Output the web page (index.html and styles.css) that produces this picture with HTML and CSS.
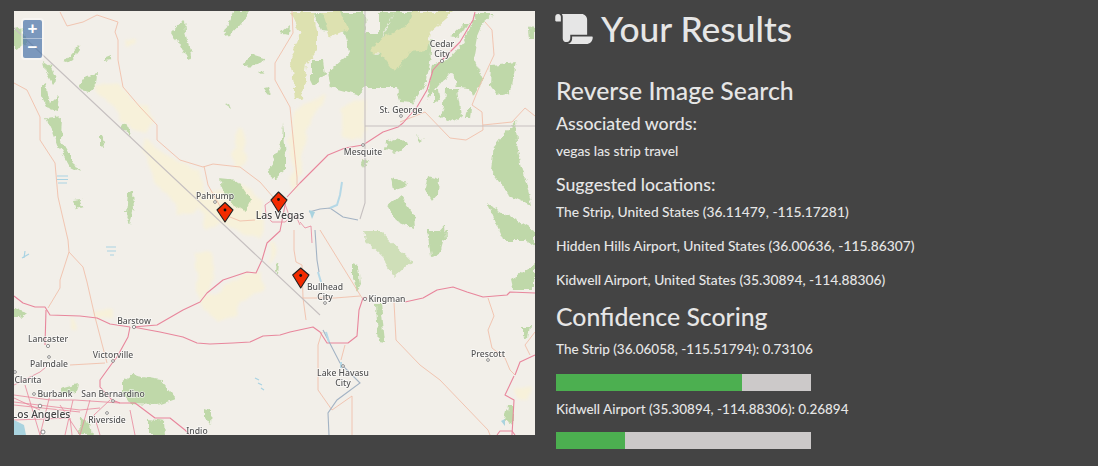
FILE: index.html
```html
<!DOCTYPE html>
<html lang="en">
<head>
<meta charset="utf-8">
<title>Your Results</title>
<link rel="stylesheet" href="styles.css">
</head>
<body>
<main class="page">
  <section class="map">
    <svg class="map-art" viewBox="14 11 521 424" xmlns="http://www.w3.org/2000/svg">
      <defs>
        <filter id="rough" x="-5%" y="-5%" width="110%" height="110%">
          <feTurbulence type="fractalNoise" baseFrequency="0.13" numOctaves="3" seed="4" result="n"/>
          <feDisplacementMap in="SourceGraphic" in2="n" scale="7" xChannelSelector="R" yChannelSelector="G"/>
          <feGaussianBlur stdDeviation="0.55"/>
        </filter>
        <filter id="haze" x="-5%" y="-5%" width="110%" height="110%">
          <feTurbulence type="fractalNoise" baseFrequency="0.06" numOctaves="2" seed="9" result="n"/>
          <feDisplacementMap in="SourceGraphic" in2="n" scale="12" xChannelSelector="R" yChannelSelector="G"/>
          <feGaussianBlur stdDeviation="1.6"/>
        </filter>
      </defs>
      <g class="desert">
        <path d="M95 85 120 83 132 100 150 105 152 122 145 132 122 122 116 108 100 95Z"/>
        <path d="M143 140 165 152 200 172 205 200 196 212 178 214 165 192 150 170Z"/>
        <path d="M240 125 245 128 246 160 236 168 234 150Z"/>
        <path d="M125 38 135 38 134 45 126 45Z"/>
        <path d="M195 252 212 255 214 285 205 298 232 282 262 272 262 290 240 300 232 320 218 325 205 312 195 285Z"/>
        <path d="M295 110 325 95 306 130 302 175 292 190 290 140Z"/>
        <path d="M342 105 365 100 365 140 345 137 342 125Z"/>
        <path d="M195 195 240 185 262 200 262 240 238 232 222 222 208 228Z"/>
        <path d="M94 310 112 308 112 318 96 320Z"/>
        <path d="M70 320 76 320 76 328 70 328Z"/>
        <path d="M270 240 276 240 274 262 270 262Z"/>
        <path d="M515 388 530 385 530 400 518 398Z"/>
      </g>
      <g class="forest">
        <path d="M14 30 22 28 28 42 18 48 14 50Z"/>
        <path d="M184 20 185 32 192 58 187 59 180 46 172 33Z"/>
        <path d="M234 12 251 12 240 24 230 35 222 36Z"/>
        <path d="M64 62 78 46 79 50 72 60 67 63Z"/>
        <path d="M105 58 110 56 110 60 105 61Z"/>
        <path d="M78 87 84 78 98 74 97 83 89 92 81 90Z"/>
        <path d="M44 62 50 66 57 80 53 85 46 72Z"/>
        <path d="M41 86 46 83 50 104 59 95 57 111 47 108 41 96Z"/>
        <path d="M46 118 62 116 61 140 70 155 80 172 70 167 58 146 53 132Z"/>
        <path d="M121 126 127 124 132 136 123 131Z"/>
        <path d="M100 136 102 136 105 146 100 145Z"/>
        <path d="M128 192 133 191 134 210 130 224 126 214Z"/>
        <path d="M73 200 81 199 83 207 76 209Z"/>
        <path d="M218 179 238 181 251 200 245 212 232 204Z"/>
        <path d="M225 105 229 104 231 109Z"/>
        <path d="M243 64 253 54 266 58 258 65 243 66Z"/>
        <path d="M259 72 263 70 262 74Z"/>
        <path d="M263 88 268 87 271 95 265 94Z"/>
        <path d="M269 166 280 152 280 172 271 179Z"/>
        <path d="M280 33 290 24 289 35Z"/>
        <path d="M283 122 286 157 286 170 275 180 270 167 282 140Z"/>
        <path d="M313 12 322 30 345 33 350 53 327 73 330 87 360 95 365 88 397 88 400 102 413 103 427 80 430 63 432 40 400 50 375 55 385 30 395 12 380 12 380 33 366 33 365 12Z"/>
        <path d="M395 12 420 12 412 30 390 45 375 52Z"/>
        <path d="M311 60 323 60 325 74 314 86 311 80Z"/>
        <path d="M451 36 465 23 469 23 458 38Z"/>
        <path d="M476 13 494 13 483 23 477 37 473 60 483 80 473 97 470 88 457 87 453 73 443 80 427 100 433 65 450 58 465 40Z"/>
        <path d="M433 90 438 90 440 100 433 103Z"/>
        <path d="M445 89 458 89 462 116 450 123 439 115 444 105Z"/>
        <path d="M467 109 471 109 470 119 465 119Z"/>
        <path d="M491 65 516 62 510 92 497 95 490 85Z"/>
        <path d="M529 29 534 26 534 39 530 39Z"/>
        <path d="M416 136 423 140 420 142Z"/>
        <path d="M386 142 396 138 408 142 404 148 394 153 385 150Z"/>
        <path d="M363 158 369 160 364 169 361 163Z"/>
        <path d="M391 178 408 183 404 187 393 189Z"/>
        <path d="M428 176 439 179 438 194 432 201 425 190Z"/>
        <path d="M388 206 400 196 414 215 415 229 396 221Z"/>
        <path d="M515 121 518 150 532 206 510 196 491 170 494 147Z"/>
        <path d="M488 204 533 230 534 240 504 240Z"/>
        <path d="M429 242 445 224 446 240 430 240Z"/>
        <path d="M427 231 446 231 440 254 431 257Z"/>
        <path d="M511 231 534 231 534 246Z"/>
        <path d="M511 280 534 264 534 289 513 289Z"/>
        <path d="M352 263 359 265 361 284 357 291 352 275Z"/>
        <path d="M376 304 381 304 385 342 379 341 377 322Z"/>
        <path d="M277 262 279 263 278 274 276 271Z"/>
        <path d="M523 326 530 326 528 338 523 336Z"/>
        <path d="M14 308 27 312 20 318 14 318Z"/>
        <path d="M122 382 132 375 160 380 175 398 158 404 130 403 122 392Z"/>
        <path d="M60 388 78 383 76 392 61 394Z"/>
        <path d="M205 408 211 410 210 424 205 418Z"/>
        <path d="M148 420 165 422 166 435 148 435Z"/>
        <path d="M80 418 90 424 92 435 79 435Z"/>
        <path d="M508 406 513 406 513 424 505 420Z"/>
      </g>
      <g class="forest light">
        <path d="M364 231 380 231 412 262 395 277 383 257 366 241Z"/>
      </g>
      <g class="khaki">
        <path d="M370 50 383 37 410 23 413 12 453 12 430 32 427 50 410 52 395 73 383 57Z"/>
        <path d="M290 12 313 12 317 30 317 50 307 63 303 97 295 100 293 77 290 63 300 33Z"/>
        <path d="M322 12 340 12 348 30 330 38Z"/>
      </g>
      <g class="lines">
        <g class="thin">
          <path d="M60 12 67 26 83 22 97 15 118 22 115 32 118 40 118 60 123 87 140 107 157 125 157 140 180 160 203 167 213 164 240 167 260 182 273 197"/>
          <path d="M14 83 27 90 40 117 40 140 55 163 58 197 68 240 69 252 60 280 60 288 48 308"/>
          <path d="M69 252 83 267 87 282 95 317 107 363"/>
          <path d="M292 11 293 33 275 63 275 80 290 107 297 177 297 185"/>
          <path d="M204 166 208 185 225 215 240 221 255 220"/>
          <path d="M485 22 492 30 494 55 480 85 472 105 482 112 483 130 466 140 450 138 425 112 400 122"/>
          <path d="M483 125 512 122 525 108 535 116"/>
          <path d="M70 365 105 363"/>
          <path d="M294 230 294 250 296 262 302 265 303 298 306 320"/>
          <path d="M320 230 362 298"/>
          <path d="M322 332 318 345 318 390 332 410 352 396 352 412 352 435"/>
          <path d="M345 345 341 360"/>
          <path d="M394 302 396 340 420 365 440 380 488 430 490 435"/>
          <path d="M488 298 494 316 488 330 492 348 505 358 510 370 515 375"/>
          <path d="M302 298 320 298 335 298 360 296"/>
          <path d="M535 332 525 345 530 355"/>
        </g>
        <g class="road">
          <path d="M475 12 473 20 460 42 442 60 433 70 427 90 417 107 403 123 398 127 383 132 363 145 345 148 328 155 313 170 300 183 287 197"/>
          <path d="M286 200 280 231 267 243 262 260 256 273 247 272 223 280 207 293 200 302 183 310 157 325 133 327"/>
          <path d="M133 327 160 332 183 337 197 343 210 344 233 343 250 342 263 336 280 335 290 332 313 327 320 332 327 343 348 343 357 336 359 310 363 298 367 298"/>
          <path d="M405 302 423 298 437 290 453 287 467 292 483 297 507 295 510 292 535 293"/>
          <path d="M130 327 128 337 117 357 113 362 100 380 100 387 112 400 120 403 135 403 155 418 170 418 185 430 190 435"/>
          <path d="M130 327 110 324 97 318 80 316 50 315 45 307 35 307 23 303 14 296"/>
          <path d="M46 310 45 345"/>
          <path d="M514 376 505 395 514 400 512 435"/>
          <path d="M535 355 520 362 515 375"/>
          <path d="M497 435 500 431 512 431 515 435"/>
          <path class="fine" d="M14 385 40 372 46 367M14 395 50 400 75 400 120 403M14 402 80 410 100 408M25 385 40 435M50 395 40 435M90 400 80 435M73 400 65 435M14 405 80 412M14 420 70 418 72 435M110 400 94 415 100 435M130 410 135 435M60 405 80 435M14 398 40 410"/>
          <path class="fine" d="M265 205 275 198 285 204 290 218 285 222 272 222 266 215Z"/>
          <path class="fine" d="M300 222 305 228 311 226 312 243M296 216 300 225"/>
        </g>
        <g class="border">
          <path d="M14 28 240 240 320 315"/>
          <path d="M365 11 365 203 360 219"/>
          <path d="M365 126 535 126"/>
        </g>
        <g class="river">
          <path d="M309 212 320 209 330 208 343 217 358 220"/>
          <path d="M315 230 317 260 319 272M323 330 340 363 360 383 337 400 328 413 329 435"/>
        </g>
        <g class="lake">
          <path d="M342 182 340 195 337 205 330 208"/>
          <path d="M318 272 321 282M326 332 329 342M341 362 341 368"/>
        </g>
        <g class="stripes">
          <path d="M57 176 68 176M57 179.5 68 179.5M58 183 67 183"/>
          <path d="M106 247 116 247M107 251 116 251M110 255 114 255"/>
          <path d="M255 378 259 380M258 383 262 385M261 388 264 390"/>
          <path d="M22 258 29 254M25 251 24 258"/>
        </g>
        <g class="water">
          <path d="M14 420 24 425 26 435 14 435Z"/>
          <path d="M501 421 505 419 505 426Z"/>
          <path d="M309 210 315 212 312 219Z"/>
        </g>
      </g>
      <g class="towns">
        <circle cx="442" cy="61" r="1.6"/><circle cx="401" cy="116" r="1.4"/><circle cx="363" cy="145" r="1.4"/><circle cx="215" cy="202" r="1.4"/>
        <circle cx="325" cy="303" r="1.4"/><circle cx="365" cy="299" r="1.6"/><circle cx="488" cy="360" r="1.4"/><circle cx="343" cy="366" r="1.4"/>
        <circle cx="134" cy="327" r="1.6"/><circle cx="48" cy="346" r="1.6"/><circle cx="49" cy="357" r="1.4"/><circle cx="113" cy="361" r="1.4"/>
        <circle cx="15" cy="372" r="1.4"/><circle cx="34" cy="394" r="1.4"/><circle cx="40" cy="406" r="1.8"/><circle cx="113" cy="401" r="1.4"/><circle cx="107" cy="413" r="1.4"/><circle cx="43" cy="432" r="2"/>
      </g>
      <g class="labels">
        <text x="442" y="47">Cedar</text><text x="442" y="57">City</text>
        <text x="401" y="113">St. George</text>
        <text x="363" y="155">Mesquite</text>
        <text x="215" y="199">Pahrump</text>
        <text x="325" y="290">Bullhead</text><text x="325" y="300">City</text>
        <text x="387" y="302">Kingman</text>
        <text x="488" y="357">Prescott</text>
        <text x="343" y="376">Lake Havasu</text><text x="343" y="386">City</text>
        <text x="134" y="324">Barstow</text>
        <text x="48" y="342">Lancaster</text>
        <text x="113" y="358">Victorville</text>
        <text x="49" y="367">Palmdale</text>
        <text x="28" y="383">Clarita</text>
        <text x="55" y="397">Burbank</text>
        <text x="113" y="397">San Bernardino</text>
        <text x="107" y="423">Riverside</text>
        <text x="197" y="433.5">Indio</text>
        <text class="big" x="280" y="219">Las Vegas</text>
        <text class="big" x="41" y="418">Los Angeles</text>
      </g>
      <g class="pins">
        <path d="M225 202.5 233 210 225 222 217 210Z"/><circle cx="225" cy="210" r="1.4"/>
        <path d="M278.5 192 287 200 278.5 212 271 200Z"/><circle cx="278.5" cy="199.5" r="1.4"/>
        <path d="M300.7 268 309 275 300.7 288 292.7 275Z"/><circle cx="300.7" cy="275.5" r="1.4"/>
      </g>
    </svg>
    <div class="zoom">
      <button class="zoom-btn" type="button">+</button>
      <button class="zoom-btn" type="button">−</button>
    </div>
  </section>
  <section class="results">
    <h1 class="title">
      <svg class="scroll" viewBox="0 0 640 512" xmlns="http://www.w3.org/2000/svg"><path d="M48 0C21.53 0 0 21.53 0 48v64c0 8.84 7.16 16 16 16h80V48C96 21.53 74.47 0 48 0zm208 412.57V352h288V96c0-52.94-43.06-96-96-96H111.59C121.74 13.41 128 29.92 128 48v368c0 38.87 34.65 69.65 74.77 63.12C234.27 474 256 444.46 256 412.57zM288 384v32c0 52.94-43.06 96-96 96h336c61.86 0 112-50.14 112-112 0-8.84-7.16-16-16-16H288z"/></svg>
      Your Results
    </h1>
    <h2 class="heading h-rev">Reverse Image Search</h2>
    <h3 class="sub">Associated words:</h3>
    <p class="line words">vegas las strip travel</p>
    <h3 class="sub">Suggested locations:</h3>
    <p class="line">The Strip, United States (36.11479, -115.17281)</p>
    <p class="line">Hidden Hills Airport, United States (36.00636, -115.86307)</p>
    <p class="line">Kidwell Airport, United States (35.30894, -114.88306)</p>
    <h2 class="heading h-conf">Confidence Scoring</h2>
    <p class="score">The Strip (36.06058, -115.51794): 0.73106</p>
    <div class="bar"><div class="fill" style="width:73.106%"></div></div>
    <p class="score score-next">Kidwell Airport (35.30894, -114.88306): 0.26894</p>
    <div class="bar"><div class="fill" style="width:26.894%"></div></div>
  </section>
</main>
</body>
</html>
```
FILE: styles.css
```css
* { box-sizing: border-box; }
html, body { margin: 0; height: 100%; }
body {
  background: #444444;
  color: #e6e6e6;
  font-family: Lato, "Open Sans", sans-serif;
  font-weight: 500;
  overflow: hidden;
}
.page {
  display: flex;
  align-items: flex-start;
  gap: 21px;
  padding: 11px 0 0 14px;
}
.map {
  position: relative;
  flex: none;
  width: 521px;
  height: 424px;
  background: #f2efe9;
  overflow: hidden;
}
.map-art { display: block; width: 100%; height: 100%; }
.desert { filter: url(#haze); }
.desert path { fill: #f7f1da; }
.khaki { filter: url(#rough); }
.khaki path { fill: #dde1b0; }
.forest { filter: url(#rough); }
.forest path { fill: #bfd8a9; }
.forest.light path { fill: #cfdfb8; }
.lines { filter: blur(0.35px); }
.thin path { fill: none; stroke: #f0c0aa; stroke-width: 0.9; }
.road path { fill: none; stroke: #e8869c; stroke-width: 1.1; stroke-linejoin: round; }
.road .fine { stroke-width: 0.8; }
.border path { fill: none; stroke: #c6c0c0; stroke-width: 1.1; }
.river path { fill: none; stroke: #a3b3c4; stroke-width: 1.1; }
.lake path { fill: none; stroke: #b5d8e6; stroke-width: 2; }
.stripes path { fill: none; stroke: #a9d3e3; stroke-width: 1.2; }
.water path { fill: #a9d3df; }
.towns circle { fill: #fff; stroke: #666; stroke-width: 0.7; }
.labels { filter: blur(0.2px); }
.labels text {
  font-family: "Noto Sans", sans-serif;
  font-size: 8.6px;
  fill: #555;
  text-anchor: middle;
  stroke: #fff;
  stroke-width: 1.5px;
  stroke-opacity: 0.7;
  paint-order: stroke;
}
.labels .big { font-size: 10.3px; fill: #444; }
.pins path { fill: #f32b00; stroke: #222; stroke-width: 1.1; stroke-linejoin: round; }
.pins circle { fill: #111; }
.zoom {
  position: absolute;
  top: 7px;
  left: 7px;
  display: flex;
  flex-direction: column;
  padding: 2px;
  background: rgba(255, 255, 255, 0.4);
  border-radius: 4px;
}
.zoom-btn {
  display: flex;
  align-items: center;
  justify-content: center;
  width: 19px;
  height: 19px;
  padding: 0 0 2px;
  border: 0;
  background: rgba(0, 60, 136, 0.5);
  color: #fff;
  font-family: "Liberation Sans", sans-serif;
  font-size: 17px;
  font-weight: 700;
  line-height: 1;
}
.zoom-btn:first-child { border-radius: 2px 2px 0 0; border-bottom: 1px solid rgba(255,255,255,.4); }
.zoom-btn:last-child { border-radius: 0 0 2px 2px; }
.results { flex: none; width: 520px; }
.title {
  display: flex;
  align-items: center;
  gap: 8px;
  margin: 0;
  height: 36px;
  font-size: 35.4px;
  font-weight: 500;
  line-height: 36px;
  white-space: nowrap;
}
.scroll { width: 38px; height: 30px; margin-left: -1px; fill: #e6e6e6; flex: none; }
.heading { margin: 0; font-size: 24.8px; font-weight: 500; line-height: 30px; }
.h-rev { margin-top: 29px; }
.h-conf { margin-top: 5px; }
.sub { margin: 6px 0 0; font-size: 17.7px; font-weight: 500; line-height: 24px; }
.line { margin: 0; font-size: 13.8px; line-height: 20px; padding: 7px 0; white-space: nowrap; }
.sub + .line { padding-top: 5px; }
.line.words { padding-bottom: 6px; }
.score { margin: 0; font-size: 13.5px; line-height: 20px; white-space: nowrap; padding-top: 7px; }
.score-next { padding-top: 8px; }
.bar { width: 255px; height: 17px; margin-top: 15px; background: #ccc9c9; }
.score-next + .bar { margin-top: 13px; }
.bar .fill { height: 100%; background: #4caf50; }
```
